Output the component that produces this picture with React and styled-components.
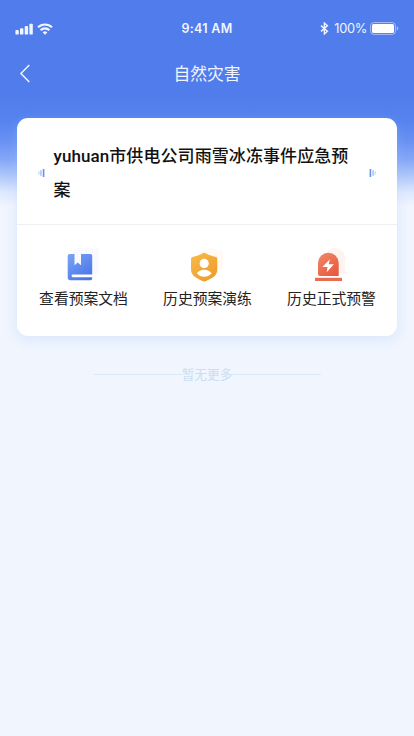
import React from "react";
import styled, { createGlobalStyle } from "styled-components";

const GlobalStyle = createGlobalStyle`
  * { box-sizing: border-box; }
  body {
    margin: 0;
    font-family: "Inter", "Noto Sans CJK SC", sans-serif;
  }
`;

const Screen = styled.div`
  min-height: 736px;
  background: linear-gradient(
    180deg,
    #507deb 0,
    #507deb 96px,
    #5583ef 120px,
    #6790f3 140px,
    #86a8f7 160px,
    #b5cbfb 178px,
    #dde8fd 192px,
    #f0f5fe 206px,
    #f0f5fe 100%
  );
`;

const StatusBar = styled.header`
  display: grid;
  grid-template-columns: 1fr auto 1fr;
  align-items: center;
  height: 57px;
  padding: 0 15px;
  color: #f1f5ff;
`;

const StatusGroup = styled.div`
  display: flex;
  align-items: center;
  justify-content: ${(p) => (p.$end ? "flex-end" : "flex-start")};
  gap: 4px;
`;

const Time = styled.span`
  font-size: 12.5px;
  font-weight: 600;
  letter-spacing: 0.3px;
`;

const Percent = styled.span`
  font-size: 12.8px;
  letter-spacing: -0.3px;
  margin: 0 -1px 0 1px;
`;

const NavBar = styled.nav`
  display: grid;
  grid-template-columns: 60px 1fr 60px;
  align-items: center;
  height: 34px;
`;

const BackButton = styled.button`
  display: flex;
  padding: 0 0 0 19px;
  border: 0;
  background: none;
`;

const PageTitle = styled.h1`
  margin: 0;
  color: #f1f5ff;
  font-size: 16.8px;
  line-height: 24px;
  font-weight: 400;
  text-align: center;
`;

const Card = styled.section`
  margin: 27px 17px 0;
  height: 218px;
  border-radius: 11px;
  background: #fff;
  box-shadow: 0 3px 12px rgba(160, 196, 250, 0.3);
`;

const PlanHeader = styled.div`
  display: flex;
  align-items: center;
  height: 107px;
  padding: 4px 21px 0;
  border-bottom: 1px solid #eeeff2;
`;

const PlanTitle = styled.h2`
  flex: 1;
  margin: 0 10px 0 8.5px;
  color: #111;
  font-family: "Roboto", "Noto Sans CJK SC", sans-serif;
  font-size: 17px;
  letter-spacing: 0.08px;
  line-height: 34px;
  font-weight: 500;
`;

const Actions = styled.div`
  display: grid;
  grid-template-columns: repeat(3, 124px);
  justify-content: center;
  padding-top: 21px;
`;

const Action = styled.button`
  display: flex;
  flex-direction: column;
  align-items: center;
  padding: 0;
  border: 0;
  background: none;
  font-family: inherit;
`;

const ActionLabel = styled.span`
  margin-top: 4px;
  padding-left: 1px;
  color: #222;
  font-size: 14.8px;
  line-height: 22px;
  white-space: nowrap;
`;

const EndNote = styled.div`
  display: flex;
  align-items: center;
  width: 227px;
  margin: 29px auto 0;
  color: #c9def3;
  font-size: 12.7px;
  line-height: 19px;
`;

const Rule = styled.span`
  flex: 1;
  height: 1px;
  background: #dbe8f7;
`;

const Signal = () => (
  <svg width="18" height="12" viewBox="0 0 18 12" fill="#f1f5ff">
    <rect x="0.4" y="7" width="3.4" height="4.6" rx="0.9" />
    <rect x="5" y="5.2" width="3.4" height="6.4" rx="0.9" />
    <rect x="9.7" y="3" width="3.4" height="8.6" rx="0.9" />
    <rect x="14.4" y="0.7" width="3.4" height="10.9" rx="0.9" />
  </svg>
);

const Wifi = () => (
  <svg width="16" height="12" viewBox="0 0 16 12" fill="none" stroke="#f1f5ff" strokeWidth="2.1">
    <path d="M1 4.3a10 10 0 0 1 14 0" />
    <path d="M3.6 7.2a6.2 6.2 0 0 1 8.8 0" />
    <path d="M8 11.7 5.7 9.4a3.3 3.3 0 0 1 4.6 0Z" fill="#f1f5ff" stroke="none" />
  </svg>
);

const Bluetooth = () => (
  <svg width="9" height="13" viewBox="0 0 9 13" fill="none" stroke="#f1f5ff" strokeWidth="1.4">
    <path d="M1 3.6 7.4 9.2 4.4 11.9V1.1L7.4 3.8 1 9.4" />
  </svg>
);

const Battery = () => (
  <svg width="29" height="13" viewBox="0 0 29 13">
    <rect x="0.6" y="0.6" width="24.8" height="11.8" rx="3" fill="none" stroke="#a9c0f7" strokeWidth="1" />
    <rect x="2" y="2" width="22" height="9" rx="1.5" fill="#fff" />
    <path d="M26.8 4.3q1.5.6 1.5 2.2t-1.5 2.2Z" fill="#a9c0f7" />
  </svg>
);

const BackIcon = () => (
  <svg width="12" height="20" viewBox="0 0 12 20" fill="none" stroke="#f7f9ff" strokeWidth="1.4">
    <path d="M10.3 1.1 1.9 9.5l8.4 8.6" />
  </svg>
);

const FlippableSvg = styled.svg`
  flex: none;
  transform: ${(p) => (p.$flip ? "scaleX(-1)" : "none")};
`;

const TitleMark = ({ flip }) => (
  <FlippableSvg $flip={flip} width="7" height="10" viewBox="0 0 7 10">
    <rect x="0" y="3.4" width="1.8" height="3.2" fill="#d3e5fc" />
    <rect x="2" y="2.2" width="1.8" height="5.6" fill="#b4d0fa" />
    <rect x="4.8" y="1" width="1.6" height="8" fill="#6692ee" />
  </FlippableSvg>
);

const BookIcon = () => (
  <svg width="48" height="38" viewBox="0 0 48 38">
    <defs>
      <linearGradient id="book" x1="0" y1="0" x2="0.7" y2="1">
        <stop offset="0" stopColor="#7ba4f8" />
        <stop offset="1" stopColor="#4a76e8" />
      </linearGradient>
    </defs>
    <rect x="14" y="2" width="25.5" height="26" rx="3" fill="#f8faff" />
    <path
      d="M10.7 8h4.8v11.3l3.2-2.7 3.3 2.7V8h9.5q1.7 0 1.7 1.7v18.7H14a1.45 1.45 0 0 0 0 2.9h19.2v1.3q0 1.7-1.7 1.7H11.7q-3 0-3-3V10q0-2 2-2Z"
      fill="url(#book)"
    />
  </svg>
);

const ShieldIcon = () => (
  <svg width="48" height="38" viewBox="0 0 48 38">
    <defs>
      <linearGradient id="shield" x1="0" y1="0" x2="0.7" y2="1">
        <stop offset="0" stopColor="#f6bd4a" />
        <stop offset="1" stopColor="#ef9c2c" />
      </linearGradient>
    </defs>
    <path d="M17 4.5Q23 4 28 1.5q5 2.5 12 3.5v13q0 7-8 11H17Z" fill="#fffbf4" />
    <path
      d="M20.2 7.1q1-.5 2 0 5.2 3 10.6 3.8 1.5.2 1.5 1.8v10.2q0 5.6-4.6 8.5-3.6 2-7.2 3.9-1.2.6-2.4 0-4-1.8-7.2-3.9Q8 28.5 8 22.9V12.7q0-1.6 1.5-1.8 5.5-.8 10.7-3.8Z"
      fill="url(#shield)"
    />
    <circle cx="21.2" cy="17.4" r="4.6" fill="#fff" />
    <path d="M13.9 27.2q2.6-3.5 7.3-3.5t7.4 3.5q-3 3.5-7.4 3.5t-7.3-3.5Z" fill="#fff" />
  </svg>
);

const SirenIcon = () => (
  <svg width="48" height="38" viewBox="0 0 48 38">
    <defs>
      <linearGradient id="siren" x1="0" y1="0" x2="0.7" y2="1">
        <stop offset="0" stopColor="#f08b68" />
        <stop offset="1" stopColor="#e85a40" />
      </linearGradient>
    </defs>
    <path d="M18 26V12a10 10 0 0 1 20 0v14h3.3v2H18Z" fill="#fef3f0" />
    <path d="M11 28V17a10.35 10.35 0 0 1 20.7 0v13H13q-2 0-2-2Z" fill="url(#siren)" />
    <rect x="8" y="31.8" width="27" height="3.2" fill="#e96b51" />
    <path d="M22.9 13.3 15.3 21h5.2l-.8 5.2 7.2-7.9h-5.2Z" fill="#fff" />
  </svg>
);

const ACTIONS = [
  { label: "查看预案文档", Icon: BookIcon },
  { label: "历史预案演练", Icon: ShieldIcon },
  { label: "历史正式预警", Icon: SirenIcon },
];

export default function App() {
  return (
    <>
      <GlobalStyle />
      <Screen>
        <StatusBar>
          <StatusGroup>
            <Signal />
            <Wifi />
          </StatusGroup>
          <Time>9:41 AM</Time>
          <StatusGroup $end>
            <Bluetooth />
            <Percent>100%</Percent>
            <Battery />
          </StatusGroup>
        </StatusBar>
        <NavBar>
          <BackButton aria-label="返回">
            <BackIcon />
          </BackButton>
          <PageTitle>自然灾害</PageTitle>
        </NavBar>
        <Card>
          <PlanHeader>
            <TitleMark />
            <PlanTitle>yuhuan市供电公司雨雪冰冻事件应急预案</PlanTitle>
            <TitleMark flip />
          </PlanHeader>
          <Actions>
            {ACTIONS.map(({ label, Icon }) => (
              <Action key={label}>
                <Icon />
                <ActionLabel>{label}</ActionLabel>
              </Action>
            ))}
          </Actions>
        </Card>
        <EndNote>
          <Rule />
          暂无更多
          <Rule />
        </EndNote>
      </Screen>
    </>
  );
}
